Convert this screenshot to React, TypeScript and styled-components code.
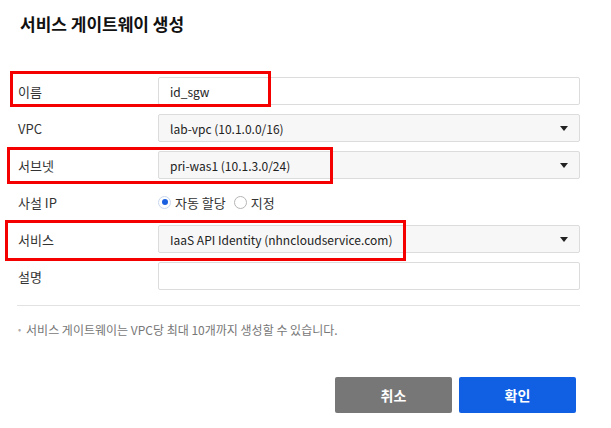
import React from 'react';
import styled, { createGlobalStyle } from 'styled-components';

const GlobalStyle = createGlobalStyle`
    body {
        margin: 0;
        background: #fff;
        font-family: 'Noto Sans CJK KR', 'Noto Sans', sans-serif;
        color: #333;
    }
`;

const Dialog = styled.div`
    width: 611px;
    height: 428px;
    box-sizing: border-box;
    padding: 12px 31px 0 17px;
    display: flex;
    flex-direction: column;
`;

const Title = styled.h2`
    margin: 0 0 0 3px;
    font-size: 17px;
    font-weight: 700;
    line-height: 24px;
    color: #111;
`;

const Form = styled.div`
    margin-top: 41px;
    display: flex;
    flex-direction: column;
    gap: 9px;
`;

const Row = styled.div`
    position: relative;
    display: grid;
    grid-template-columns: 141px 1fr;
    align-items: center;
    height: 28px;
`;

const Label = styled.label`
    padding-left: 1px;
    font-size: 13px;
    color: #333;
`;

const Field = styled.div<{ $select?: boolean }>`
    height: 28px;
    box-sizing: border-box;
    border: 1px solid #dcdcdc;
    border-radius: 2px;
    background: ${(p) => (p.$select ? '#f7f7f7' : '#fff')};
    padding: 0 11px;
    display: flex;
    align-items: center;
    justify-content: space-between;
    font-size: 12px;
    color: #222;
`;

const Caret = styled.span`
    width: 0;
    height: 0;
    border-left: 4px solid transparent;
    border-right: 4px solid transparent;
    border-top: 5px solid #222;
`;

const Radios = styled.div`
    display: flex;
    align-items: center;
    gap: 8px;
    font-size: 13px;
    color: #333;
`;

const RadioItem = styled.span`
    display: flex;
    align-items: center;
    gap: 4px;
`;

const RadioDot = styled.span<{ $on?: boolean }>`
    width: 13px;
    height: 13px;
    box-sizing: border-box;
    border-radius: 50%;
    border: 1px solid ${(p) => (p.$on ? '#c9d6ee' : '#b5b5b5')};
    background: #fff;
    display: flex;
    align-items: center;
    justify-content: center;
    &::after {
        content: '';
        width: 6px;
        height: 6px;
        border-radius: 50%;
        background: ${(p) => (p.$on ? '#1a5fe0' : 'transparent')};
    }
`;

// red highlight frame laid over a form row
const Highlight = styled.div<{ $l: number; $t: number; $w: number; $h: number }>`
    position: absolute;
    left: ${(p) => p.$l}px;
    top: ${(p) => p.$t}px;
    width: ${(p) => p.$w}px;
    height: ${(p) => p.$h}px;
    box-sizing: border-box;
    border: 3px solid #f40000;
    pointer-events: none;
`;

const Divider = styled.hr`
    margin: 15px 0 0;
    border: 0;
    border-top: 1px solid #e2e2e2;
`;

const Note = styled.p`
    margin: 15px 0 0 1px;
    font-size: 12px;
    color: #777;
    &::before {
        content: '•';
        margin-right: 5px;
        color: #aaa;
        font-size: 9px;
        vertical-align: 2px;
    }
`;

const Footer = styled.div`
    margin-top: 39px;
    padding-right: 4px;
    display: flex;
    justify-content: flex-end;
    gap: 7px;
`;

const Button = styled.button<{ $primary?: boolean }>`
    width: 117px;
    height: 36px;
    border: 0;
    border-radius: 2px;
    background: ${(p) => (p.$primary ? '#1160e4' : '#777')};
    color: #fff;
    font-family: inherit;
    font-size: 14px;
    font-weight: 700;
`;

const App = () => (
    <>
        <GlobalStyle />
        <Dialog>
            <Title>서비스 게이트웨이 생성</Title>
            <Form>
                <Row>
                    <Label>이름</Label>
                    <Field>id_sgw</Field>
                    <Highlight $l={-7} $t={-6} $w={261} $h={36} />
                </Row>
                <Row>
                    <Label>VPC</Label>
                    <Field $select>
                        lab-vpc (10.1.0.0/16)
                        <Caret />
                    </Field>
                </Row>
                <Row>
                    <Label>서브넷</Label>
                    <Field $select>
                        pri-was1 (10.1.3.0/24)
                        <Caret />
                    </Field>
                    <Highlight $l={-10} $t={-4} $w={326} $h={37} />
                </Row>
                <Row>
                    <Label>사설 IP</Label>
                    <Radios>
                        <RadioItem>
                            <RadioDot $on />
                            자동 할당
                        </RadioItem>
                        <RadioItem>
                            <RadioDot />
                            지정
                        </RadioItem>
                    </Radios>
                </Row>
                <Row>
                    <Label>서비스</Label>
                    <Field $select>
                        IaaS API Identity (nhncloudservice.com)
                        <Caret />
                    </Field>
                    <Highlight $l={-12} $t={-5} $w={401} $h={41} />
                </Row>
                <Row>
                    <Label>설명</Label>
                    <Field />
                </Row>
            </Form>
            <Divider />
            <Note>서비스 게이트웨이는 VPC당 최대 10개까지 생성할 수 있습니다.</Note>
            <Footer>
                <Button>취소</Button>
                <Button $primary>확인</Button>
            </Footer>
        </Dialog>
    </>
);

export default App;
